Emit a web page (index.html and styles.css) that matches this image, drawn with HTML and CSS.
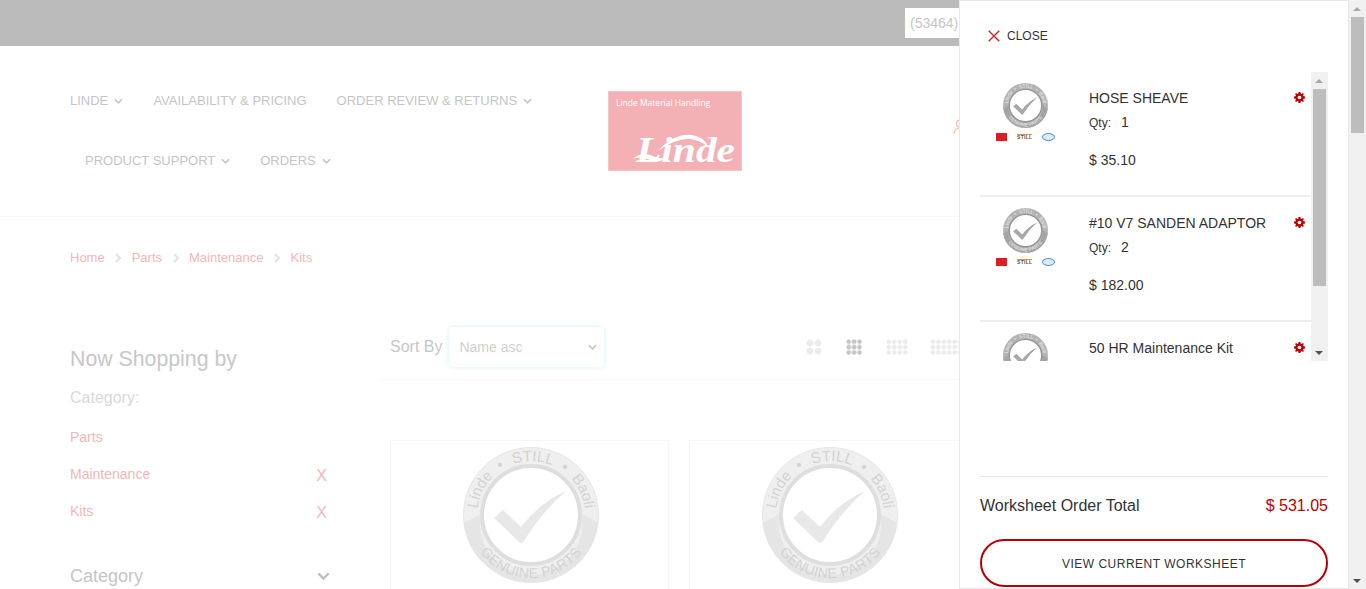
FILE: index.html
```html
<!DOCTYPE html>
<html lang="en">
<head>
  <meta charset="UTF-8">
  <meta name="viewport" content="width=device-width, initial-scale=1.0">
  <title>Kits - Linde Parts</title>
  <link rel="stylesheet" href="styles.css">
</head>
<body>

<svg class="svg-defs" aria-hidden="true">
  <defs>
    <path id="arcTop" d="M14 68 A54 54 0 0 1 122 68"/>
    <path id="arcBottom" d="M5 68 A63 63 0 0 0 131 68"/>
    <symbol id="seal" viewBox="0 0 136 136">
      <circle cx="68" cy="68" r="67.5" fill="var(--seal-ring)" stroke="var(--seal-edge)"/>
      <path d="M1 76 L18 67 A51 51 0 1 0 118 67 L135 76 A67.500 67.500 0 0 1 1 76Z" fill="var(--seal-shade)"/>
      <circle cx="68" cy="68" r="49" fill="#fff" stroke="var(--seal-rim)" stroke-width="4"/>
      <path d="M31 71 L40 63 L58 80 Q76 56 103 44 Q78 66 61 94 Q58 98 55 94Z" fill="var(--seal-check)"/>
      <text class="seal-text seal-text-top" text-anchor="middle"><textPath href="#arcTop" startOffset="50%">Linde • STILL • Baoli</textPath></text>
      <text class="seal-text seal-text-bottom" text-anchor="middle"><textPath href="#arcBottom" startOffset="50%">GENUINE PARTS</textPath></text>
    </symbol>
    <symbol id="chev" viewBox="0 0 10 6">
      <path d="M1 1l4 4 4-4" fill="none" stroke="currentColor" stroke-width="1.800"/>
    </symbol>
    <symbol id="gear" viewBox="0 0 12 12">
      <path d="M5 0h2l.3 1.600 1.100.5L9.800 1.200l1 1-.9 1.400.5 1.100L12 5v2l-1.600.3-.5 1.100.9 1.400-1 1-1.400-.9-1.100.5L7 12H5l-.3-1.600-1.100-.5-1.400.9-1-1 .9-1.400-.5-1.100L0 7V5l1.600-.3.5-1.100-.9-1.400 1-1 1.400.9 1.100-.5z" fill="#c00000"/>
      <circle cx="6" cy="6" r="2" fill="#fff"/>
    </symbol>
  </defs>
</svg>

<div class="page">
  <div class="topbar">
    <div class="acct-box">(53464)</div>
  </div>

  <header class="site-header">
    <nav class="main-nav">
      <div class="nav-row">
        <a class="nav-link">LINDE <svg class="nav-chev"><use href="#chev"/></svg></a>
        <a class="nav-link">AVAILABILITY &amp; PRICING</a>
        <a class="nav-link">ORDER REVIEW &amp; RETURNS <svg class="nav-chev"><use href="#chev"/></svg></a>
      </div>
      <div class="nav-row nav-row-second">
        <a class="nav-link">PRODUCT SUPPORT <svg class="nav-chev"><use href="#chev"/></svg></a>
        <a class="nav-link">ORDERS <svg class="nav-chev"><use href="#chev"/></svg></a>
      </div>
    </nav>
    <svg class="logo" viewBox="0 0 134 80">
      <rect x=".5" y=".5" width="133" height="79" fill="#f3b1b5" stroke="#f5c2c5"/>
      <text class="logo-small" x="8" y="15">Linde Material Handling</text>
      <path d="M50 60 Q66 42 84 44 Q97 46 100 56 Q92 49 82 48 Q68 47 50 60Z" fill="#fff"/>
      <path d="M25 68 Q33 60 45 65 Q53 69 60 66 Q50 73 42 69 Q32 65 25 68Z" fill="#fff"/>
      <text class="logo-big" x="28" y="71" textLength="99" lengthAdjust="spacingAndGlyphs">Linde</text>
    </svg>
    <svg class="user-icon" viewBox="0 0 14 16">
      <circle cx="7" cy="4.500" r="3.500" fill="none" stroke="#f2b9a8" stroke-width="1.200"/>
      <path d="M1 15c0-4 2-6 6-6s6 2 6 6" fill="none" stroke="#f2b9a8" stroke-width="1.200"/>
    </svg>
  </header>

  <div class="breadcrumb">
    <a>Home</a><svg class="crumb-sep" viewBox="0 0 6 10"><path d="M1 1l4 4-4 4" fill="none" stroke="#e2e2e2" stroke-width="2"/></svg>
    <a>Parts</a><svg class="crumb-sep" viewBox="0 0 6 10"><path d="M1 1l4 4-4 4" fill="none" stroke="#e2e2e2" stroke-width="2"/></svg>
    <a>Maintenance</a><svg class="crumb-sep" viewBox="0 0 6 10"><path d="M1 1l4 4-4 4" fill="none" stroke="#e2e2e2" stroke-width="2"/></svg>
    <a>Kits</a>
  </div>

  <div class="content">
    <aside class="sidebar">
      <h2 class="side-title">Now Shopping by</h2>
      <div class="side-label">Category:</div>
      <div class="filter"><a>Parts</a></div>
      <div class="filter"><a>Maintenance</a><span class="filter-x">X</span></div>
      <div class="filter"><a>Kits</a><span class="filter-x">X</span></div>
      <div class="side-group">Category <svg class="side-chev"><use href="#chev"/></svg></div>
    </aside>

    <main class="results">
      <div class="toolbar">
        <span class="sort-label">Sort By</span>
        <div class="sort-select">Name asc <svg class="nav-chev"><use href="#chev"/></svg></div>
        <div class="view-icons">
          <span class="dots dots-2"></span>
          <span class="dots dots-3"></span>
          <span class="dots dots-4"></span>
          <span class="dots dots-5"></span>
        </div>
      </div>
      <div class="products">
        <div class="product-card"><svg class="seal-big"><use href="#seal"/></svg></div>
        <div class="product-card"><svg class="seal-big"><use href="#seal"/></svg></div>
      </div>
    </main>
  </div>
</div>

<aside class="cart-panel">
  <div class="close-row">
    <svg class="close-x" viewBox="0 0 12 12"><path d="M.7.7l10.600 10.600M11.300.7L.7 11.300" stroke="#d2232a" stroke-width="1.400"/></svg>
    CLOSE
  </div>

  <div class="mini-list">
    <div class="mini-items">
      <div class="mini-item">
        <div class="mini-thumb">
          <svg class="seal-small"><use href="#seal"/></svg>
          <div class="brands">
            <span class="brand-linde"></span>
            <span class="brand-still">STILL</span>
            <span class="brand-baoli"></span>
          </div>
        </div>
        <div class="mini-info">
          <div class="mini-name">HOSE SHEAVE</div>
          <div class="mini-qty"><span class="qty-label">Qty:</span> 1</div>
          <div class="mini-price">$ 35.10</div>
        </div>
        <svg class="mini-gear"><use href="#gear"/></svg>
      </div>
      <div class="mini-item">
        <div class="mini-thumb">
          <svg class="seal-small"><use href="#seal"/></svg>
          <div class="brands">
            <span class="brand-linde"></span>
            <span class="brand-still">STILL</span>
            <span class="brand-baoli"></span>
          </div>
        </div>
        <div class="mini-info">
          <div class="mini-name">#10 V7 SANDEN ADAPTOR</div>
          <div class="mini-qty"><span class="qty-label">Qty:</span> 2</div>
          <div class="mini-price">$ 182.00</div>
        </div>
        <svg class="mini-gear"><use href="#gear"/></svg>
      </div>
      <div class="mini-item">
        <div class="mini-thumb">
          <svg class="seal-small"><use href="#seal"/></svg>
        </div>
        <div class="mini-info">
          <div class="mini-name">50 HR Maintenance Kit</div>
        </div>
        <svg class="mini-gear"><use href="#gear"/></svg>
      </div>
    </div>
    <div class="bar bar-mini">
      <span class="arrow-up"></span>
      <span class="bar-thumb"></span>
      <span class="arrow-down"></span>
    </div>
  </div>

  <div class="cart-total">
    <span>Worksheet Order Total</span>
    <span class="total-price">$ 531.05</span>
  </div>
  <a class="view-btn">VIEW CURRENT WORKSHEET</a>
</aside>

<div class="bar bar-page">
  <span class="arrow-up"></span>
  <span class="bar-thumb"></span>
  <span class="arrow-down"></span>
</div>

</body>
</html>
```

FILE: styles.css
```css
body {
  margin: 0;
  height: 589px;
  overflow: hidden;
  font-family: 'Liberation Sans', Arial, sans-serif;
  background: #fff;
  color: #333;
  --seal-ring: #efefef;
  --seal-edge: #e6e6e6;
  --seal-shade: #e5e5e5;
  --seal-rim: #dedede;
  --seal-check: #e8e8e8;
  --seal-text: #d2d2d2;
}

.svg-defs {
  position: absolute;
  width: 0;
  height: 0;
}

.seal-text {
  font-family: 'Liberation Sans', sans-serif;
  font-size: 15px;
  fill: var(--seal-text);
}

.seal-text-top {
  word-spacing: 5px;
}

.seal-text-bottom {
  font-size: 14px;
  letter-spacing: .4px;
}

/* page behind the panel, colours already washed out */
.page {
  width: 1349px;
  height: 589px;
  overflow: hidden;
}

.topbar {
  height: 46px;
  background: #bbbbbb;
  box-sizing: border-box;
  padding: 8px 0 0 905px;
}

.acct-box {
  width: 60px;
  height: 30px;
  box-sizing: border-box;
  background: #fff;
  padding-left: 5px;
  font-size: 14px;
  line-height: 30px;
  color: #c6c6c6;
}

.site-header {
  height: 171px;
  box-sizing: border-box;
  border-bottom: 1px solid #f6f6f6;
  padding: 45px 0 0 70px;
  display: flex;
}

.main-nav {
  width: 538px;
  padding-top: 1px;
}

.nav-row {
  display: flex;
  gap: 30px;
  height: 60px;
  line-height: 18px;
}

.nav-row-second {
  padding-left: 15px;
}

.nav-link {
  font-size: 13px;
  color: #c5c5c5;
}

.nav-chev {
  width: 9px;
  height: 6px;
  margin-left: 2.500px;
  color: #c5c5c5;
  vertical-align: 1px;
}

.logo {
  width: 134px;
  height: 80px;
}

.logo-small {
  font-family: 'Open Sans', sans-serif;
  font-size: 8.500px;
  fill: #fff;
}

.logo-big {
  font-family: 'Liberation Serif', serif;
  font-size: 36px;
  font-style: italic;
  font-weight: bold;
  fill: #fff;
}

.user-icon {
  width: 14px;
  height: 16px;
  margin: 28px 0 0 211px;
}

.breadcrumb {
  display: flex;
  align-items: center;
  padding-left: 70px;
  height: 81px;
  font-size: 13px;
  color: #f2b6b8;
}

.crumb-sep {
  width: 6px;
  height: 10px;
  margin: 0 10.500px;
}

.content {
  display: flex;
  padding-left: 70px;
  margin-top: 11px;
}

.sidebar {
  width: 260px;
  margin-right: 50px;
}

.side-title {
  margin: 38px 0 0;
  font-size: 21.300px;
  line-height: 24px;
  font-weight: normal;
  color: #c8c8c8;
}

.side-label {
  margin: 18px 0 22px;
  font-size: 16px;
  line-height: 18px;
  color: #d9d9d9;
}

.filter {
  display: flex;
  justify-content: space-between;
  height: 37px;
  font-size: 14px;
  line-height: 16px;
  color: #f2b6b8;
}

.filter-x {
  font-size: 16px;
  line-height: 20px;
  margin-right: 3px;
}

.side-group {
  display: flex;
  justify-content: space-between;
  align-items: center;
  margin-top: 25px;
  font-size: 18px;
  line-height: 22px;
  color: #c6c6c6;
}

.side-chev {
  width: 13px;
  height: 8px;
  color: #c0c0c0;
}

.results {
  flex: 1;
}

.toolbar {
  display: flex;
  align-items: center;
  gap: 7px;
  border-bottom: 1px solid #f6f6f6;
  padding: 18px 0 12px 10px;
}

.sort-label {
  font-size: 16px;
  color: #c6c6c6;
}

.sort-select {
  width: 155px;
  height: 40px;
  box-sizing: border-box;
  padding: 0 7px 0 10px;
  display: flex;
  justify-content: space-between;
  align-items: center;
  font-size: 14px;
  color: #d0d0d0;
  border-radius: 3px;
  box-shadow: 0 0 5px #cfeefc;
}

.view-icons {
  display: flex;
  align-items: center;
  margin-left: 195px;
}

.dots {
  display: block;
  background-image: radial-gradient(circle closest-side, var(--dot) 70%, transparent 100%);
}

.dots-2 {
  --dot: #ebebeb;
  width: 16px;
  height: 16px;
  background-size: 8px 8px;
  margin-right: 24px;
}

.dots-3 {
  --dot: #c4c4c4;
  width: 16px;
  height: 16px;
  background-size: 5.400px 5.400px;
  margin-right: 24px;
}

.dots-4 {
  --dot: #ebebeb;
  width: 22px;
  height: 16px;
  background-size: 5.500px 5.400px;
  margin-right: 22px;
}

.dots-5 {
  --dot: #ebebeb;
  width: 30px;
  height: 16px;
  background-size: 5.500px 5.400px;
}

.products {
  display: flex;
  gap: 20px;
  margin: 60px 0 0 10px;
}

.product-card {
  width: 279px;
  height: 300px;
  box-sizing: border-box;
  border: 1px solid #f6f6f6;
  padding: 6px 0 0 72px;
}

.seal-big {
  width: 136px;
  height: 136px;
}

/* worksheet panel */
.cart-panel {
  position: absolute;
  top: 0;
  left: 959px;
  width: 390px;
  height: 589px;
  box-sizing: border-box;
  border: 1px solid #e8e8e8;
  background: #fff;
  padding: 0 20px;
  --seal-ring: #b4b4b4;
  --seal-edge: #a8a8a8;
  --seal-shade: #a4a4a4;
  --seal-rim: #949494;
  --seal-check: #a8a8a8;
  --seal-text: #ececec;
}

.close-row {
  display: flex;
  align-items: center;
  gap: 7px;
  height: 71px;
  box-sizing: border-box;
  padding: 0 0 2px 8px;
  font-size: 12px;
  color: #333;
}

.close-x {
  width: 12px;
  height: 12px;
}

.mini-list {
  display: flex;
  height: 289px;
  overflow: hidden;
}

.mini-items {
  width: 331px;
}

.mini-item {
  display: flex;
  height: 123px;
  border-bottom: 2px solid #eeeeee;
}

.mini-thumb {
  width: 109px;
  padding-top: 11px;
  box-sizing: border-box;
}

.seal-small {
  display: block;
  width: 45px;
  height: 45px;
  margin: 0 0 0 23px;
}

.brands {
  display: flex;
  align-items: center;
  gap: 10px;
  margin: 5px 0 0 16px;
}

.brand-linde {
  width: 11px;
  height: 8px;
  background: #dd1c24;
}

.brand-still {
  width: 15px;
  border-top: 1px solid #e8902c;
  font-size: 5px;
  line-height: 5px;
  font-weight: bold;
  letter-spacing: .3px;
  color: #555;
}

.brand-baoli {
  width: 13px;
  height: 8px;
  box-sizing: border-box;
  border: 1px solid #5d9ac8;
  border-radius: 50%;
  background: #dcecf6;
}

.mini-info {
  flex: 1;
  font-size: 14px;
  color: #333;
  padding-top: 17px;
}

.mini-name {
  line-height: 18px;
}

.mini-qty {
  margin-top: 6px;
  line-height: 18px;
}

.qty-label {
  font-size: 12px;
  margin-right: 6px;
}

.mini-price {
  margin-top: 19px;
  line-height: 18px;
}

.mini-gear {
  width: 11px;
  height: 11px;
  margin: 20px 6px 0 0;
}

.bar {
  background: #f0f0f0;
  width: 17px;
  box-sizing: border-box;
  padding: 0 2px;
  display: flex;
  flex-direction: column;
  flex: none;
}

.bar-mini {
  height: 289px;
}

.bar-mini .bar-thumb {
  height: 197px;
}

.bar-page {
  position: absolute;
  top: 0;
  right: 0;
  height: 589px;
}

.bar-page .bar-thumb {
  height: 116px;
}

.bar-thumb {
  display: block;
  background: #bdbdbd;
}

.arrow-up,
.arrow-down {
  display: block;
  width: 0;
  height: 0;
  border-left: 4px solid transparent;
  border-right: 4px solid transparent;
}

.arrow-up {
  border-bottom: 4px solid #a8a8a8;
  margin: 7px 0 6px 2px;
}

.arrow-down {
  border-top: 4px solid #505050;
  margin: auto 0 6px 2px;
}

.cart-total {
  display: flex;
  justify-content: space-between;
  align-items: center;
  margin-top: 115px;
  height: 63px;
  padding-bottom: 5px;
  border-top: 1px solid #e8e8e8;
  box-sizing: border-box;
  font-size: 16px;
  color: #333;
}

.total-price {
  color: #c00000;
}

.view-btn {
  display: block;
  height: 48px;
  box-sizing: border-box;
  border: 2px solid #b80000;
  border-radius: 24px;
  text-align: center;
  font-size: 12px;
  letter-spacing: .5px;
  line-height: 46px;
  color: #333;
}
```
